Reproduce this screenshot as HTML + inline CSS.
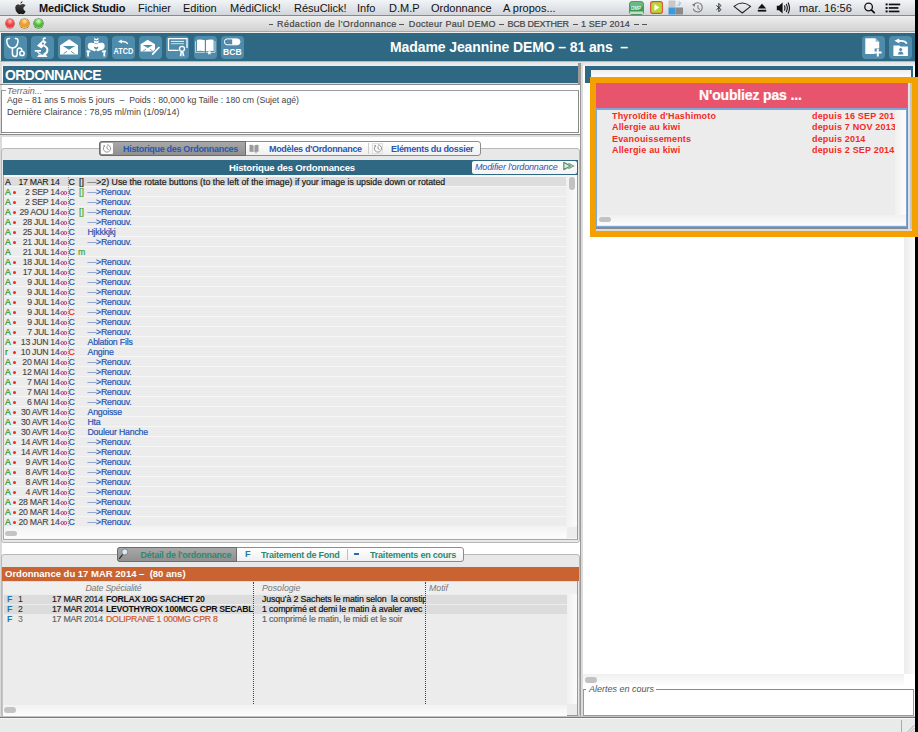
<!DOCTYPE html>
<html><head><meta charset="utf-8">
<style>
*{box-sizing:border-box}
html,body{margin:0;padding:0;width:918px;height:732px;overflow:hidden;background:#000;font-family:"Liberation Sans",sans-serif}
.a{position:absolute}
.t{position:absolute;white-space:pre;line-height:1}
#win{position:absolute;left:0;top:0;width:915px;height:732px;background:#ececec;overflow:hidden}
#menubar{left:0;top:0;width:918px;height:16px;background:linear-gradient(#f2f4f7,#d2d6db);border-bottom:1px solid #8a8a8a}
#titlebar{left:0;top:16px;width:915px;height:16px;background:linear-gradient(#eeeeee,#d2d2d2);border-bottom:1px solid #a8a8a8}
.dot{position:absolute;top:19px;width:9px;height:9px;border-radius:50%}
#toolbar{left:1px;top:33px;width:914px;height:28px;background:#2f6882}
.btn{position:absolute;top:36px;width:23px;height:23px;border-radius:4px;background:#4f8cab}
.btn svg{position:absolute;left:0;top:0}
.hdr{position:absolute;background:#2f6882}
.row{position:absolute;left:4px;width:562px;height:9px;background:#ececec}
.rt{position:absolute;font-size:8.75px;line-height:10px;white-space:pre;-webkit-text-stroke-width:0.2px}
.mi{font-size:11px;color:#111;top:2.5px}
.s{-webkit-text-stroke-width:0.2px}
</style></head><body>
<div id="win">
<!-- menu bar -->
<div id="menubar" class="a"></div>
<div class="t mi" style="left:39px;font-weight:bold;letter-spacing:-0.15px">MediClick Studio</div>
<div class="t mi" style="left:138px">Fichier</div>
<div class="t mi" style="left:183px">Edition</div>
<div class="t mi" style="left:230px">MédiClick!</div>
<div class="t mi" style="left:294px">RésuClick!</div>
<div class="t mi" style="left:357px">Info</div>
<div class="t mi" style="left:389px">D.M.P</div>
<div class="t mi" style="left:431px">Ordonnance</div>
<div class="t mi" style="left:503px">A propos...</div>
<div class="t mi" style="left:799px;letter-spacing:0.1px">mar. 16:56</div>
<svg class="a" style="left:13px;top:0px" width="14" height="15" viewBox="0 0 14 15"><defs><linearGradient id="ap" x1="0" y1="0" x2="0" y2="1"><stop offset="0" stop-color="#444"/><stop offset="1" stop-color="#111"/></linearGradient></defs><path d="M9.6 1 Q9.6 3.2 7.4 3.8 Q7.3 1.6 9.6 1 Z" fill="url(#ap)"/><path d="M7 4.9 Q8.6 4 10.2 4.1 Q11.8 4.3 12.6 5.4 Q10.2 6.6 10.3 8.6 Q10.5 10.6 12.6 11.2 Q12 12.8 11 13.7 Q10.2 14.4 9.2 14 Q8 13.5 7 13.9 Q5.8 14.4 5 13.6 Q2 10.6 2.2 7.4 Q2.4 4.6 5 4.3 Q6 4.3 7 4.9 Z" fill="url(#ap)"/></svg>
<svg class="a" style="left:629px;top:1px" width="16" height="14" viewBox="0 0 16 14"><rect x="0.5" y="0.5" width="14" height="13" rx="2.5" fill="#3f9a58" stroke="#2f7a40" stroke-width="0.6"/><rect x="1" y="1" width="13" height="5" rx="2" fill="#7cc890" opacity="0.7"/><text x="2" y="9" font-family="Liberation Sans" font-size="4.5" font-weight="bold" fill="#eaf6ea">DMP</text><rect x="1" y="10.5" width="13" height="2.5" fill="#e8f0e8" opacity="0.8"/></svg>
<svg class="a" style="left:650px;top:1px" width="13" height="13" viewBox="0 0 13 13"><rect x="0.6" y="0.6" width="11.8" height="11.8" rx="2.2" fill="#b6d832" stroke="#e0503a" stroke-width="1.1"/><path d="M4.4 3.3 L9.4 6.5 L4.4 9.7 Z" fill="#fff"/></svg>
<svg class="a" style="left:668px;top:0px" width="16" height="15" viewBox="0 0 16 15"><rect x="0.5" y="0.5" width="7" height="7" fill="#c8c8c8"/><rect x="0.5" y="7.5" width="7" height="7" fill="#3a9ae0"/><rect x="7.5" y="7.5" width="7.5" height="7" fill="#8a8a8a"/><path d="M10.5 1 L12 4 L9 5.5 M13 2 L11 6" stroke="#8ac0e8" stroke-width="0.8" fill="none"/></svg>
<svg class="a" style="left:691px;top:1px" width="13" height="13" viewBox="0 0 13 13"><path d="M3 3.6 A4.6 4.6 0 1 1 2.2 7.6" fill="none" stroke="#7a7a7a" stroke-width="1.1"/><path d="M0.8 3.4 L4.2 2.6 L3.6 6 Z" fill="#7a7a7a"/><path d="M7 4 V7.4 L9 8.4" fill="none" stroke="#7a7a7a" stroke-width="1"/></svg>
<svg class="a" style="left:715px;top:2px" width="8" height="12" viewBox="0 0 8 12"><path d="M1.4 3.4 L6 7.6 L3.8 9.8 V1.4 L6 3.6 L1.4 7.8" fill="none" stroke="#222" stroke-width="0.9"/></svg>
<svg class="a" style="left:733px;top:2px" width="19" height="12" viewBox="0 0 19 12"><path d="M1 4.4 Q9.2 -2.4 17.6 4.4 L9.3 11 Z" fill="none" stroke="#222" stroke-width="1.1" stroke-linejoin="round"/></svg>
<svg class="a" style="left:757px;top:2px" width="10" height="12" viewBox="0 0 10 12"><path d="M5 1.8 L9.2 6.4 H0.8 Z" fill="#111"/><rect x="0.8" y="7.8" width="8.4" height="1.8" fill="#111"/></svg>
<svg class="a" style="left:776px;top:1px" width="15" height="14" viewBox="0 0 15 14"><path d="M0.8 4.8 H3 L6.6 1.6 V12.4 L3 9.2 H0.8 Z" fill="#111"/><path d="M8.4 4.6 Q9.6 7 8.4 9.4 M10.2 3 Q12.4 7 10.2 11 M12 1.6 Q15 7 12 12.4" fill="none" stroke="#111" stroke-width="1.1"/></svg>
<svg class="a" style="left:863px;top:1px" width="13" height="14" viewBox="0 0 13 14"><circle cx="5.6" cy="6" r="3.8" fill="none" stroke="#111" stroke-width="1.3"/><path d="M8.4 8.8 L11.2 11.6" stroke="#111" stroke-width="1.8" stroke-linecap="round"/></svg>
<svg class="a" style="left:885px;top:2px" width="17" height="12" viewBox="0 0 17 12"><g fill="#111"><rect x="0.6" y="1.4" width="2" height="2"/><rect x="0.6" y="5" width="2" height="2"/><rect x="0.6" y="8.4" width="2" height="2"/><rect x="3.8" y="1.6" width="11.4" height="1.7"/><rect x="3.8" y="5.1" width="9.6" height="1.7"/><rect x="3.8" y="8.6" width="10.6" height="1.7"/></g></svg>

<!-- title bar -->
<div id="titlebar" class="a"></div>
<div class="dot" style="left:5.5px;top:19px;width:8.5px;height:8.5px;box-shadow:0 0 0 0.6px #9a3a3a;background:radial-gradient(circle at 50% 25%,#fcc 0,#f55 35%,#e33 60%,#f77 100%)"></div>
<div class="dot" style="left:20px;top:19px;width:8.5px;height:8.5px;box-shadow:0 0 0 0.6px #9a6a2a;background:radial-gradient(circle at 50% 25%,#ffe8b0 0,#f0a030 40%,#e89a20 60%,#fc6 100%)"></div>
<div class="dot" style="left:34.3px;top:19px;width:8.5px;height:8.5px;box-shadow:0 0 0 0.6px #3a7a3a;background:radial-gradient(circle at 50% 25%,#dfd 0,#6c4 40%,#4a3 60%,#9e7 100%)"></div>
<div class="a" style="left:268.7px;top:23.5px;width:4.5px;height:1px;background:#555"></div>
<div class="a" style="left:399.4px;top:23.5px;width:4.5px;height:1px;background:#555"></div>
<div class="a" style="left:499.2px;top:23.5px;width:4.5px;height:1px;background:#555"></div>
<div class="a" style="left:573.3px;top:23.5px;width:4.5px;height:1px;background:#555"></div>
<div class="a" style="left:634.3px;top:23.5px;width:4.5px;height:1px;background:#555"></div>
<div class="a" style="left:642px;top:23.5px;width:4.5px;height:1px;background:#555"></div>
<div class="t s" style="left:277px;top:19.5px;font-size:9px;color:#444;letter-spacing:0.44px">Rédaction de l'Ordonnance</div>
<div class="t s" style="left:408.8px;top:19.5px;font-size:9px;color:#444;letter-spacing:0.33px">Docteur Paul DEMO</div>
<div class="t s" style="left:507.5px;top:19.5px;font-size:9px;color:#444;letter-spacing:-0.24px">BCB DEXTHER</div>
<div class="t s" style="left:581px;top:19.5px;font-size:9px;color:#444;letter-spacing:0.1px">1 SEP 2014</div>

<!-- toolbar -->
<div id="toolbar" class="a"></div>
<div class="btn" style="left:4px"><svg width="23" height="23" viewBox="0 0 23 23"><g fill="none" stroke="#fff" stroke-width="1.5" stroke-linecap="round"><path d="M5.4 2.4 Q2.6 2.2 2.8 5.4 Q3.4 11.6 8.4 12 Q13.4 11.6 14 5.4 Q14.2 2.2 11.4 2.4"/><path d="M8.4 12 V17.6 Q8.4 20.6 11 20.6 Q13.2 20.6 13.2 17.4 V15 Q13.2 12 15.5 12 Q17.9 12 17.9 15"/><circle cx="18" cy="17.4" r="2.2"/></g></svg></div>
<div class="btn" style="left:31px"><svg width="23" height="23" viewBox="0 0 23 23"><g fill="#fff"><path d="M11.2 2.4 L14.2 0.9 L15.1 2.5 L12.1 4 Z"/><path d="M12.2 3.8 L15.6 6 L10.6 12.6 L6 9.8 Z"/><rect x="3.8" y="14" width="6.2" height="1.7"/><path d="M7.8 18.4 H14.8 L16.6 20.9 H6 Z"/></g><circle cx="11.9" cy="7.6" r="1.1" fill="#4f8cab"/><path d="M12.6 9.6 Q16.6 10.8 16.4 14.4 Q16.2 17.6 12.6 18.4" fill="none" stroke="#fff" stroke-width="2"/><path d="M6.4 15.6 Q7.2 17.4 9.6 17.8" fill="none" stroke="#fff" stroke-width="1.2"/></svg></div>
<div class="btn" style="left:58px"><svg width="23" height="23" viewBox="0 0 23 23"><path d="M2.1 9.2 L11.2 3.2 L20 9.2 V18.6 H2.1 Z" fill="#fff"/><path d="M4.8 10 H17.2 L11 13.7 Z" fill="#4f8cab"/><path d="M5.5 17.8 L9 15.3 M16.5 17.8 L13 15.3" stroke="#4f8cab" stroke-width="0.9"/></svg></div>
<div class="btn" style="left:85px"><svg width="23" height="23" viewBox="0 0 23 23"><g fill="#fff"><path d="M9 1.8 L11.2 3 L13.6 1.8 L13.2 3.8 L11.2 4.6 L9.4 3.8 Z"/><path d="M8.8 4.6 L11.2 5.6 L13.8 4.6 L13.4 6.8 L11.2 7.6 L9.2 6.8 Z"/><path d="M11.2 8.2 Q8.5 6.4 5 6.8 Q2.4 7.4 2.8 10.8 Q3.2 13.6 6.6 14.2 Q8.6 14.4 9.6 15.4 Q10.4 14.2 11.2 14.6 Q12 14.2 12.8 15.4 Q13.8 14.4 15.8 14.2 Q19.2 13.6 19.6 10.8 Q20 7.4 17.4 6.8 Q14 6.4 11.2 8.2 Z"/><path d="M1.4 14.6 Q3.4 13.6 5.6 15 L5 16.4 L4 16.2 V20.6 H2.2 V16.4 Q1.2 16 1.4 14.6 Z"/><path d="M21 14.6 Q19 13.6 16.8 15 L17.4 16.4 L18.4 16.2 V20.6 H20.2 V16.4 Q21.2 16 21 14.6 Z"/></g><path d="M11.2 11.4 Q10 10.2 9 11 Q8.6 12 11.2 13.8 Q13.8 12 13.4 11 Q12.4 10.2 11.2 11.4 Z" fill="#4f8cab"/></svg></div>
<div class="btn" style="left:112px"><svg width="23" height="23" viewBox="0 0 23 23"><path d="M15.8 7.8 Q14.2 5.2 9.8 5.6" fill="none" stroke="#fff" stroke-width="1.4"/><path d="M6 5.4 L9.8 3.6 L10 7.6 Z" fill="#fff"/><text x="1.5" y="17.8" font-family="Liberation Sans" font-weight="bold" font-size="8.6" fill="#fff" textLength="19.8" lengthAdjust="spacingAndGlyphs">ATCD</text></svg></div>
<div class="btn" style="left:139px"><svg width="23" height="23" viewBox="0 0 23 23"><path d="M1.6 8.3 L8.6 3.8 L16 8.3 V15.6 H1.6 Z" fill="#fff"/><path d="M3.8 9 H13.8 L8.8 12 Z" fill="#4f8cab"/><path d="M4 15 L7 13 M13.6 15 L10.6 13" stroke="#4f8cab" stroke-width="0.8"/><path d="M13.3 18.6 L20.2 11.2" stroke="#4f8cab" stroke-width="3.4"/><path d="M13.4 18.4 L20.4 11" stroke="#fff" stroke-width="1.8"/><path d="M12.6 19.4 L13.4 17.6 L14.2 18.4 Z" fill="#fff"/></svg></div>
<div class="btn" style="left:166px"><svg width="23" height="23" viewBox="0 0 23 23"><path d="M12.6 14.3 H2.5 V2.6 H21 V12" fill="none" stroke="#fff" stroke-width="1.3"/><rect x="5" y="4.9" width="13" height="1" fill="#fff" opacity="0.9"/><rect x="5" y="7.2" width="13" height="1" fill="#fff" opacity="0.7"/><circle cx="16" cy="12.8" r="2.5" fill="none" stroke="#fff" stroke-width="1.3"/><path d="M14.6 15.4 L13.6 20.4 L14.6 19.8 L15.4 20.8 L16 15.8 Z M17.4 15.4 L18.6 20.4 L17.6 19.8 L16.8 20.8 L16 15.8 Z" fill="#fff"/></svg></div>
<div class="btn" style="left:194px"><svg width="23" height="23" viewBox="0 0 23 23"><path d="M1.6 5 V16.4 H10.8 M21 5 V16.4 H12" fill="none" stroke="#fff" stroke-width="0.8" opacity="0.8"/><path d="M3 3.8 Q7 3.2 10.8 4.2 V15.2 Q7 14.4 3 15 Z" fill="#fff"/><path d="M19.6 3.8 Q15.6 3.2 12 4.2 V15.2 Q15.6 14.4 19.6 15 Z" fill="#fff"/><path d="M14.2 15.2 H16.6 V18.8 L15.4 17.8 L14.2 18.8 Z" fill="#fff"/></svg></div>
<div class="btn" style="left:221px"><svg width="23" height="23" viewBox="0 0 23 23"><path d="M6.2 2.9 H16.2 Q19 2.9 19 5.8 Q19 8.8 16.2 8.8 H6.2 Q3.4 8.8 3.4 5.8 Q3.4 2.9 6.2 2.9 Z" fill="none" stroke="#fff" stroke-width="1"/><path d="M11.2 2.9 H16.2 Q19 2.9 19 5.8 Q19 8.8 16.2 8.8 H11.2 Z" fill="#fff"/><text x="2" y="18.8" font-family="Liberation Sans" font-weight="bold" font-size="9" fill="#fff" textLength="18.6" lengthAdjust="spacingAndGlyphs">BCB</text></svg></div>
<div class="t" style="left:390px;top:40px;font-size:14px;font-weight:bold;color:#fff;letter-spacing:-0.1px">Madame Jeannine DEMO – 81 ans  –</div>
<div class="btn" style="left:862px"><svg width="23" height="23" viewBox="0 0 23 23"><path d="M3.3 2.2 H13.6 L17.2 5.8 V12.6 H12.6 V18 H3.3 Z" fill="#fff"/><path d="M13.6 2.2 V5.8 H17.2" fill="#4f8cab" opacity="0.6"/><path d="M15.8 13 V20.4 M12.2 16.6 H19.6" stroke="#fff" stroke-width="2"/></svg></div>
<div class="btn" style="left:889px"><svg width="23" height="23" viewBox="0 0 23 23"><path d="M17.8 7.6 Q15.8 4.2 10 5" fill="none" stroke="#fff" stroke-width="1.8"/><path d="M5.4 4.8 L10.2 2.4 L10.4 7.4 Z" fill="#fff"/><path d="M4.4 9.4 H10.6 L11.4 10.6 H18.9 V19.9 H4.4 Z" fill="#fff"/><circle cx="11.7" cy="13.6" r="1.5" fill="#4f8cab"/><path d="M9 18.6 Q9.2 15.6 11.7 15.6 Q14.2 15.6 14.4 18.6 Z" fill="#4f8cab"/></svg></div>

<!-- LEFT PANEL -->
<div class="a" style="left:0;top:61px;width:915px;height:5px;background:linear-gradient(#b8b8b8 0,#b8b8b8 1px,#e2e2e2 1px,#efefef)"></div>
<div class="a" style="left:0;top:66px;width:580px;height:652px;background:#fff"></div>
<div class="a" style="left:0;top:63px;width:1.5px;height:655px;background:#dadada"></div>
<div class="hdr" style="left:3px;top:66px;width:575px;height:17px"></div>
<div class="t" style="left:5px;top:68px;font-size:14px;font-weight:bold;color:#fff;letter-spacing:-0.6px">ORDONNANCE</div>
<div class="a" style="left:0;top:83px;width:580px;height:1px;background:#dcdcdc"></div>
<div class="a" style="left:0;top:84px;width:580px;height:1px;background:#8a8a8a"></div>
<!-- terrain box -->
<div class="a" style="left:1px;top:90px;width:578px;height:43px;border:1px solid #8a8a8a;border-top-color:#9a9a9a"></div>
<div class="a" style="left:6px;top:86px;width:38px;height:8px;background:#fff"></div>
<div class="t" style="left:7px;top:87px;font-size:9px;font-style:italic;color:#666">Terrain...</div>
<div class="t" style="left:7px;top:96px;font-size:8.7px;color:#444">Age – 81 ans 5 mois 5 jours  –  Poids : 80,000 kg Taille : 180 cm (Sujet agé)</div>
<div class="t" style="left:7px;top:108px;font-size:9px;color:#444">Dernière Clairance : 78,95 ml/min (1/09/14)</div>
<div class="a" style="left:0;top:134px;width:580px;height:1px;background:#8a8a8a"></div>
<div class="a" style="left:0;top:135px;width:580px;height:1.5px;background:#dedede"></div>

<!-- historique groupbox -->
<div class="a" style="left:1px;top:148px;width:579px;height:395px;border:1px solid #b8b8b8;border-radius:3px;background:#e8e8e8"></div>
<!-- tabs -->
<div class="a" style="left:99px;top:141px;width:382px;height:15px;border:1px solid #8c8c8c;border-radius:3px;background:linear-gradient(#ffffff,#f0f0f0)"></div>
<div class="a" style="left:99px;top:141px;width:147px;height:15px;border:1px solid #6c6c6c;border-radius:3px 0 0 3px;background:linear-gradient(#a8a8a8,#909090)"></div>
<div class="a" style="left:101px;top:143px;width:12px;height:11px;background:#fdfdfd;border-radius:1px"></div>
<svg class="a" style="left:101px;top:143px" width="12" height="11" viewBox="0 0 12 11"><path d="M3.2 3.2 A3.6 3.6 0 1 0 6 1.9" fill="none" stroke="#8a8a8a" stroke-width="0.9"/><path d="M2.2 2.2 L4.2 2.2 L3.4 4.2 Z" fill="#8a8a8a"/><path d="M6 3.4 V5.6 L7.6 6.6" fill="none" stroke="#8a8a8a" stroke-width="0.9"/></svg>
<div class="t" style="left:123px;top:145px;font-size:9px;font-weight:bold;color:#2a55b0;letter-spacing:-0.31px">Historique des Ordonnances</div>
<svg class="a" style="left:248px;top:143px" width="12" height="11" viewBox="0 0 12 11"><path d="M1.5 2 Q3.5 1.6 5.6 2.4 V9 Q3.5 8.4 1.5 8.8 Z M10.5 2 Q8.5 1.6 6.4 2.4 V9 Q8.5 8.4 10.5 8.8 Z" fill="#9a9a9a"/><path d="M7.4 8.6 H8.6 V10.4 L8 9.8 L7.4 10.4 Z" fill="#9a9a9a"/></svg>
<div class="t" style="left:269px;top:145px;font-size:9px;font-weight:bold;color:#2a55b0;letter-spacing:-0.32px">Modèles d'Ordonnance</div>
<div class="a" style="left:368px;top:143px;width:1px;height:11px;background:#cfcfcf"></div>
<div class="a" style="left:372px;top:143px;width:11px;height:11px;background:#f8f8f8;border:1px solid #e0e0e0"></div>
<svg class="a" style="left:372px;top:143px" width="12" height="11" viewBox="0 0 12 11"><path d="M3.2 3.2 A3.6 3.6 0 1 0 6 1.9" fill="none" stroke="#8a8a8a" stroke-width="0.9"/><path d="M2.2 2.2 L4.2 2.2 L3.4 4.2 Z" fill="#8a8a8a"/><path d="M6 3.4 V5.6 L7.6 6.6" fill="none" stroke="#8a8a8a" stroke-width="0.9"/></svg>
<div class="t" style="left:391px;top:145px;font-size:9px;font-weight:bold;color:#2a55b0;letter-spacing:-0.3px">Eléments du dossier</div>

<!-- historique header -->
<div class="hdr" style="left:3px;top:160px;width:575px;height:15px"></div>
<div class="t" style="left:229px;top:163px;font-size:9.6px;font-weight:bold;color:#fff;letter-spacing:-0.2px">Historique des Ordonnances</div>
<div class="a" style="left:472px;top:161px;width:105px;height:13px;background:linear-gradient(#fff,#f4f4f4);border-radius:2px"></div>
<svg class="a" style="left:562px;top:161px" width="13" height="10" viewBox="0 0 13 10"><path d="M1.8 1.4 L8.6 5 L1.8 8.6 Z" fill="#dcecdc" stroke="#5e9070" stroke-width="1.2" stroke-linejoin="round"/><path d="M6.4 2.2 L11.6 5 L6.4 7.8" fill="none" stroke="#6e9a80" stroke-width="1.1"/></svg>
<div class="t" style="left:475px;top:163px;font-size:9px;font-style:italic;color:#2a55b0;letter-spacing:-0.15px">Modifier l'ordonnance</div>

<!-- list -->
<div class="a" style="left:3px;top:175px;width:575px;height:365px;background:#f6f6f6;border-left:1px solid #aaa;border-bottom:1px solid #aaa;border-right:1px solid #999"></div>
<div class="row" style="top:177px;background:#dddddd"></div>
<div class="rt" style="left:5px;top:177px;color:#1a1a1a">A</div>
<div class="rt" style="left:0;width:59.5px;text-align:right;top:177px;color:#1a1a1a;letter-spacing:-0.3px;-webkit-text-stroke-width:0.1px">17 MAR 14</div>
<div class="rt" style="left:68.5px;top:177px;color:#1a1a1a">C</div>
<div class="rt" style="left:79px;top:177px;color:#1a1a1a">[]</div>
<div class="rt" style="left:87.5px;top:177px;color:#1a1a1a;"><span style="color:#777">—</span>>2) Use the rotate buttons (to the left of the image) if your image is upside down or rotated</div>
<div class="row" style="top:187px;background:#ececec"></div>
<div class="rt" style="left:5px;top:187px;color:#2a922a">A</div>
<div class="a" style="left:12.5px;top:190.5px;width:3px;height:3px;border-radius:50%;background:#f21"></div>
<div class="rt" style="left:0;width:59.5px;text-align:right;top:187px;color:#444;letter-spacing:-0.3px;-webkit-text-stroke-width:0.1px">2 SEP 14</div>
<svg class="a" style="left:60px;top:190px" width="8" height="6" viewBox="0 0 8 6"><circle cx="2.3" cy="3" r="1.5" fill="none" stroke="#b03a78" stroke-width="0.95"/><circle cx="5.3" cy="3" r="1.5" fill="none" stroke="#b03a78" stroke-width="0.95"/></svg>
<div class="rt" style="left:68.5px;top:187px;color:#2556b4">C</div>
<div class="rt" style="left:79px;top:187px;color:#3aa53a">[]</div>
<div class="rt" style="left:87.5px;top:187px;color:#2556b4;letter-spacing:-0.2px;"><span style="color:#7c98cc">—</span>>Renouv.</div>
<div class="row" style="top:197px;background:#ececec"></div>
<div class="rt" style="left:5px;top:197px;color:#2a922a">A</div>
<div class="a" style="left:12.5px;top:200.5px;width:3px;height:3px;border-radius:50%;background:#f21"></div>
<div class="rt" style="left:0;width:59.5px;text-align:right;top:197px;color:#444;letter-spacing:-0.3px;-webkit-text-stroke-width:0.1px">2 SEP 14</div>
<svg class="a" style="left:60px;top:200px" width="8" height="6" viewBox="0 0 8 6"><circle cx="2.3" cy="3" r="1.5" fill="none" stroke="#b03a78" stroke-width="0.95"/><circle cx="5.3" cy="3" r="1.5" fill="none" stroke="#b03a78" stroke-width="0.95"/></svg>
<div class="rt" style="left:68.5px;top:197px;color:#2556b4">C</div>
<div class="rt" style="left:87.5px;top:197px;color:#2556b4;letter-spacing:-0.2px;"><span style="color:#7c98cc">—</span>>Renouv.</div>
<div class="row" style="top:207px;background:#ececec"></div>
<div class="rt" style="left:5px;top:207px;color:#2a922a">A</div>
<div class="a" style="left:12.5px;top:210.5px;width:3px;height:3px;border-radius:50%;background:#f21"></div>
<div class="rt" style="left:0;width:59.5px;text-align:right;top:207px;color:#444;letter-spacing:-0.3px;-webkit-text-stroke-width:0.1px">29 AOU 14</div>
<svg class="a" style="left:60px;top:210px" width="8" height="6" viewBox="0 0 8 6"><circle cx="2.3" cy="3" r="1.5" fill="none" stroke="#b03a78" stroke-width="0.95"/><circle cx="5.3" cy="3" r="1.5" fill="none" stroke="#b03a78" stroke-width="0.95"/></svg>
<div class="rt" style="left:68.5px;top:207px;color:#2556b4">C</div>
<div class="rt" style="left:79px;top:207px;color:#3aa53a">[]</div>
<div class="rt" style="left:87.5px;top:207px;color:#2556b4;letter-spacing:-0.2px;"><span style="color:#7c98cc">—</span>>Renouv.</div>
<div class="row" style="top:217px;background:#ececec"></div>
<div class="rt" style="left:5px;top:217px;color:#2a922a">A</div>
<div class="a" style="left:12.5px;top:220.5px;width:3px;height:3px;border-radius:50%;background:#f21"></div>
<div class="rt" style="left:0;width:59.5px;text-align:right;top:217px;color:#444;letter-spacing:-0.3px;-webkit-text-stroke-width:0.1px">28 JUL 14</div>
<svg class="a" style="left:60px;top:220px" width="8" height="6" viewBox="0 0 8 6"><circle cx="2.3" cy="3" r="1.5" fill="none" stroke="#b03a78" stroke-width="0.95"/><circle cx="5.3" cy="3" r="1.5" fill="none" stroke="#b03a78" stroke-width="0.95"/></svg>
<div class="rt" style="left:68.5px;top:217px;color:#2556b4">C</div>
<div class="rt" style="left:87.5px;top:217px;color:#2556b4;letter-spacing:-0.2px;"><span style="color:#7c98cc">—</span>>Renouv.</div>
<div class="row" style="top:227px;background:#ececec"></div>
<div class="rt" style="left:5px;top:227px;color:#2a922a">A</div>
<div class="a" style="left:12.5px;top:230.5px;width:3px;height:3px;border-radius:50%;background:#f21"></div>
<div class="rt" style="left:0;width:59.5px;text-align:right;top:227px;color:#444;letter-spacing:-0.3px;-webkit-text-stroke-width:0.1px">25 JUL 14</div>
<svg class="a" style="left:60px;top:230px" width="8" height="6" viewBox="0 0 8 6"><circle cx="2.3" cy="3" r="1.5" fill="none" stroke="#b03a78" stroke-width="0.95"/><circle cx="5.3" cy="3" r="1.5" fill="none" stroke="#b03a78" stroke-width="0.95"/></svg>
<div class="rt" style="left:68.5px;top:227px;color:#2556b4">C</div>
<div class="rt" style="left:87.5px;top:227px;color:#2556b4;letter-spacing:-0.2px;">Hjkkkjkj</div>
<div class="row" style="top:237px;background:#ececec"></div>
<div class="rt" style="left:5px;top:237px;color:#2a922a">A</div>
<div class="a" style="left:12.5px;top:240.5px;width:3px;height:3px;border-radius:50%;background:#f21"></div>
<div class="rt" style="left:0;width:59.5px;text-align:right;top:237px;color:#444;letter-spacing:-0.3px;-webkit-text-stroke-width:0.1px">21 JUL 14</div>
<svg class="a" style="left:60px;top:240px" width="8" height="6" viewBox="0 0 8 6"><circle cx="2.3" cy="3" r="1.5" fill="none" stroke="#b03a78" stroke-width="0.95"/><circle cx="5.3" cy="3" r="1.5" fill="none" stroke="#b03a78" stroke-width="0.95"/></svg>
<div class="rt" style="left:68.5px;top:237px;color:#2556b4">C</div>
<div class="rt" style="left:87.5px;top:237px;color:#2556b4;letter-spacing:-0.2px;"><span style="color:#7c98cc">—</span>>Renouv.</div>
<div class="row" style="top:247px;background:#ececec"></div>
<div class="rt" style="left:5px;top:247px;color:#2a922a">A</div>
<div class="rt" style="left:0;width:59.5px;text-align:right;top:247px;color:#444;letter-spacing:-0.3px;-webkit-text-stroke-width:0.1px">21 JUL 14</div>
<svg class="a" style="left:60px;top:250px" width="8" height="6" viewBox="0 0 8 6"><circle cx="2.3" cy="3" r="1.5" fill="none" stroke="#b03a78" stroke-width="0.95"/><circle cx="5.3" cy="3" r="1.5" fill="none" stroke="#b03a78" stroke-width="0.95"/></svg>
<div class="rt" style="left:68.5px;top:247px;color:#2556b4">C</div>
<div class="rt" style="left:78px;top:247px;color:#3aa53a">m</div>
<div class="row" style="top:257px;background:#ececec"></div>
<div class="rt" style="left:5px;top:257px;color:#2a922a">A</div>
<div class="a" style="left:12.5px;top:260.5px;width:3px;height:3px;border-radius:50%;background:#f21"></div>
<div class="rt" style="left:0;width:59.5px;text-align:right;top:257px;color:#444;letter-spacing:-0.3px;-webkit-text-stroke-width:0.1px">18 JUL 14</div>
<svg class="a" style="left:60px;top:260px" width="8" height="6" viewBox="0 0 8 6"><circle cx="2.3" cy="3" r="1.5" fill="none" stroke="#b03a78" stroke-width="0.95"/><circle cx="5.3" cy="3" r="1.5" fill="none" stroke="#b03a78" stroke-width="0.95"/></svg>
<div class="rt" style="left:68.5px;top:257px;color:#2556b4">C</div>
<div class="rt" style="left:87.5px;top:257px;color:#2556b4;letter-spacing:-0.2px;"><span style="color:#7c98cc">—</span>>Renouv.</div>
<div class="row" style="top:267px;background:#ececec"></div>
<div class="rt" style="left:5px;top:267px;color:#2a922a">A</div>
<div class="a" style="left:12.5px;top:270.5px;width:3px;height:3px;border-radius:50%;background:#f21"></div>
<div class="rt" style="left:0;width:59.5px;text-align:right;top:267px;color:#444;letter-spacing:-0.3px;-webkit-text-stroke-width:0.1px">17 JUL 14</div>
<svg class="a" style="left:60px;top:270px" width="8" height="6" viewBox="0 0 8 6"><circle cx="2.3" cy="3" r="1.5" fill="none" stroke="#b03a78" stroke-width="0.95"/><circle cx="5.3" cy="3" r="1.5" fill="none" stroke="#b03a78" stroke-width="0.95"/></svg>
<div class="rt" style="left:68.5px;top:267px;color:#2556b4">C</div>
<div class="rt" style="left:87.5px;top:267px;color:#2556b4;letter-spacing:-0.2px;"><span style="color:#7c98cc">—</span>>Renouv.</div>
<div class="row" style="top:277px;background:#ececec"></div>
<div class="rt" style="left:5px;top:277px;color:#2a922a">A</div>
<div class="a" style="left:12.5px;top:280.5px;width:3px;height:3px;border-radius:50%;background:#f21"></div>
<div class="rt" style="left:0;width:59.5px;text-align:right;top:277px;color:#444;letter-spacing:-0.3px;-webkit-text-stroke-width:0.1px">9 JUL 14</div>
<svg class="a" style="left:60px;top:280px" width="8" height="6" viewBox="0 0 8 6"><circle cx="2.3" cy="3" r="1.5" fill="none" stroke="#b03a78" stroke-width="0.95"/><circle cx="5.3" cy="3" r="1.5" fill="none" stroke="#b03a78" stroke-width="0.95"/></svg>
<div class="rt" style="left:68.5px;top:277px;color:#2556b4">C</div>
<div class="rt" style="left:87.5px;top:277px;color:#2556b4;letter-spacing:-0.2px;"><span style="color:#7c98cc">—</span>>Renouv.</div>
<div class="row" style="top:287px;background:#ececec"></div>
<div class="rt" style="left:5px;top:287px;color:#2a922a">A</div>
<div class="a" style="left:12.5px;top:290.5px;width:3px;height:3px;border-radius:50%;background:#f21"></div>
<div class="rt" style="left:0;width:59.5px;text-align:right;top:287px;color:#444;letter-spacing:-0.3px;-webkit-text-stroke-width:0.1px">9 JUL 14</div>
<svg class="a" style="left:60px;top:290px" width="8" height="6" viewBox="0 0 8 6"><circle cx="2.3" cy="3" r="1.5" fill="none" stroke="#b03a78" stroke-width="0.95"/><circle cx="5.3" cy="3" r="1.5" fill="none" stroke="#b03a78" stroke-width="0.95"/></svg>
<div class="rt" style="left:68.5px;top:287px;color:#2556b4">C</div>
<div class="rt" style="left:87.5px;top:287px;color:#2556b4;letter-spacing:-0.2px;"><span style="color:#7c98cc">—</span>>Renouv.</div>
<div class="row" style="top:297px;background:#ececec"></div>
<div class="rt" style="left:5px;top:297px;color:#2a922a">A</div>
<div class="a" style="left:12.5px;top:300.5px;width:3px;height:3px;border-radius:50%;background:#f21"></div>
<div class="rt" style="left:0;width:59.5px;text-align:right;top:297px;color:#444;letter-spacing:-0.3px;-webkit-text-stroke-width:0.1px">9 JUL 14</div>
<svg class="a" style="left:60px;top:300px" width="8" height="6" viewBox="0 0 8 6"><circle cx="2.3" cy="3" r="1.5" fill="none" stroke="#b03a78" stroke-width="0.95"/><circle cx="5.3" cy="3" r="1.5" fill="none" stroke="#b03a78" stroke-width="0.95"/></svg>
<div class="rt" style="left:68.5px;top:297px;color:#2556b4">C</div>
<div class="rt" style="left:87.5px;top:297px;color:#2556b4;letter-spacing:-0.2px;"><span style="color:#7c98cc">—</span>>Renouv.</div>
<div class="row" style="top:307px;background:#ececec"></div>
<div class="rt" style="left:5px;top:307px;color:#2a922a">A</div>
<div class="a" style="left:12.5px;top:310.5px;width:3px;height:3px;border-radius:50%;background:#f21"></div>
<div class="rt" style="left:0;width:59.5px;text-align:right;top:307px;color:#444;letter-spacing:-0.3px;-webkit-text-stroke-width:0.1px">9 JUL 14</div>
<svg class="a" style="left:60px;top:310px" width="8" height="6" viewBox="0 0 8 6"><circle cx="2.3" cy="3" r="1.5" fill="none" stroke="#b03a78" stroke-width="0.95"/><circle cx="5.3" cy="3" r="1.5" fill="none" stroke="#b03a78" stroke-width="0.95"/></svg>
<div class="rt" style="left:68.5px;top:307px;color:#ee2a1a">C</div>
<div class="rt" style="left:87.5px;top:307px;color:#2556b4;letter-spacing:-0.2px;"><span style="color:#7c98cc">—</span>>Renouv.</div>
<div class="row" style="top:317px;background:#ececec"></div>
<div class="rt" style="left:5px;top:317px;color:#2a922a">A</div>
<div class="a" style="left:12.5px;top:320.5px;width:3px;height:3px;border-radius:50%;background:#f21"></div>
<div class="rt" style="left:0;width:59.5px;text-align:right;top:317px;color:#444;letter-spacing:-0.3px;-webkit-text-stroke-width:0.1px">9 JUL 14</div>
<svg class="a" style="left:60px;top:320px" width="8" height="6" viewBox="0 0 8 6"><circle cx="2.3" cy="3" r="1.5" fill="none" stroke="#b03a78" stroke-width="0.95"/><circle cx="5.3" cy="3" r="1.5" fill="none" stroke="#b03a78" stroke-width="0.95"/></svg>
<div class="rt" style="left:68.5px;top:317px;color:#2556b4">C</div>
<div class="rt" style="left:87.5px;top:317px;color:#2556b4;letter-spacing:-0.2px;"><span style="color:#7c98cc">—</span>>Renouv.</div>
<div class="row" style="top:327px;background:#ececec"></div>
<div class="rt" style="left:5px;top:327px;color:#2a922a">A</div>
<div class="a" style="left:12.5px;top:330.5px;width:3px;height:3px;border-radius:50%;background:#f21"></div>
<div class="rt" style="left:0;width:59.5px;text-align:right;top:327px;color:#444;letter-spacing:-0.3px;-webkit-text-stroke-width:0.1px">7 JUL 14</div>
<svg class="a" style="left:60px;top:330px" width="8" height="6" viewBox="0 0 8 6"><circle cx="2.3" cy="3" r="1.5" fill="none" stroke="#b03a78" stroke-width="0.95"/><circle cx="5.3" cy="3" r="1.5" fill="none" stroke="#b03a78" stroke-width="0.95"/></svg>
<div class="rt" style="left:68.5px;top:327px;color:#2556b4">C</div>
<div class="rt" style="left:87.5px;top:327px;color:#2556b4;letter-spacing:-0.2px;"><span style="color:#7c98cc">—</span>>Renouv.</div>
<div class="row" style="top:337px;background:#ececec"></div>
<div class="rt" style="left:5px;top:337px;color:#2a922a">A</div>
<div class="a" style="left:12.5px;top:340.5px;width:3px;height:3px;border-radius:50%;background:#f21"></div>
<div class="rt" style="left:0;width:59.5px;text-align:right;top:337px;color:#444;letter-spacing:-0.3px;-webkit-text-stroke-width:0.1px">13 JUN 14</div>
<svg class="a" style="left:60px;top:340px" width="8" height="6" viewBox="0 0 8 6"><circle cx="2.3" cy="3" r="1.5" fill="none" stroke="#b03a78" stroke-width="0.95"/><circle cx="5.3" cy="3" r="1.5" fill="none" stroke="#b03a78" stroke-width="0.95"/></svg>
<div class="rt" style="left:68.5px;top:337px;color:#2556b4">C</div>
<div class="rt" style="left:87.5px;top:337px;color:#2556b4;letter-spacing:-0.2px;">Ablation Fils</div>
<div class="row" style="top:347px;background:#ececec"></div>
<div class="rt" style="left:5px;top:347px;color:#2a922a">r</div>
<div class="a" style="left:12.5px;top:350.5px;width:3px;height:3px;border-radius:50%;background:#f21"></div>
<div class="rt" style="left:0;width:59.5px;text-align:right;top:347px;color:#444;letter-spacing:-0.3px;-webkit-text-stroke-width:0.1px">10 JUN 14</div>
<svg class="a" style="left:60px;top:350px" width="8" height="6" viewBox="0 0 8 6"><circle cx="2.3" cy="3" r="1.5" fill="none" stroke="#b03a78" stroke-width="0.95"/><circle cx="5.3" cy="3" r="1.5" fill="none" stroke="#b03a78" stroke-width="0.95"/></svg>
<div class="rt" style="left:68.5px;top:347px;color:#ee2a1a">C</div>
<div class="rt" style="left:87.5px;top:347px;color:#2556b4;letter-spacing:-0.2px;">Angine</div>
<div class="row" style="top:357px;background:#ececec"></div>
<div class="rt" style="left:5px;top:357px;color:#2a922a">A</div>
<div class="a" style="left:12.5px;top:360.5px;width:3px;height:3px;border-radius:50%;background:#f21"></div>
<div class="rt" style="left:0;width:59.5px;text-align:right;top:357px;color:#444;letter-spacing:-0.3px;-webkit-text-stroke-width:0.1px">20 MAI 14</div>
<svg class="a" style="left:60px;top:360px" width="8" height="6" viewBox="0 0 8 6"><circle cx="2.3" cy="3" r="1.5" fill="none" stroke="#b03a78" stroke-width="0.95"/><circle cx="5.3" cy="3" r="1.5" fill="none" stroke="#b03a78" stroke-width="0.95"/></svg>
<div class="rt" style="left:68.5px;top:357px;color:#2556b4">C</div>
<div class="rt" style="left:87.5px;top:357px;color:#2556b4;letter-spacing:-0.2px;"><span style="color:#7c98cc">—</span>>Renouv.</div>
<div class="row" style="top:367px;background:#ececec"></div>
<div class="rt" style="left:5px;top:367px;color:#2a922a">A</div>
<div class="a" style="left:12.5px;top:370.5px;width:3px;height:3px;border-radius:50%;background:#f21"></div>
<div class="rt" style="left:0;width:59.5px;text-align:right;top:367px;color:#444;letter-spacing:-0.3px;-webkit-text-stroke-width:0.1px">12 MAI 14</div>
<svg class="a" style="left:60px;top:370px" width="8" height="6" viewBox="0 0 8 6"><circle cx="2.3" cy="3" r="1.5" fill="none" stroke="#b03a78" stroke-width="0.95"/><circle cx="5.3" cy="3" r="1.5" fill="none" stroke="#b03a78" stroke-width="0.95"/></svg>
<div class="rt" style="left:68.5px;top:367px;color:#2556b4">C</div>
<div class="rt" style="left:87.5px;top:367px;color:#2556b4;letter-spacing:-0.2px;"><span style="color:#7c98cc">—</span>>Renouv.</div>
<div class="row" style="top:377px;background:#ececec"></div>
<div class="rt" style="left:5px;top:377px;color:#2a922a">A</div>
<div class="a" style="left:12.5px;top:380.5px;width:3px;height:3px;border-radius:50%;background:#f21"></div>
<div class="rt" style="left:0;width:59.5px;text-align:right;top:377px;color:#444;letter-spacing:-0.3px;-webkit-text-stroke-width:0.1px">7 MAI 14</div>
<svg class="a" style="left:60px;top:380px" width="8" height="6" viewBox="0 0 8 6"><circle cx="2.3" cy="3" r="1.5" fill="none" stroke="#b03a78" stroke-width="0.95"/><circle cx="5.3" cy="3" r="1.5" fill="none" stroke="#b03a78" stroke-width="0.95"/></svg>
<div class="rt" style="left:68.5px;top:377px;color:#2556b4">C</div>
<div class="rt" style="left:87.5px;top:377px;color:#2556b4;letter-spacing:-0.2px;"><span style="color:#7c98cc">—</span>>Renouv.</div>
<div class="row" style="top:387px;background:#ececec"></div>
<div class="rt" style="left:5px;top:387px;color:#2a922a">A</div>
<div class="a" style="left:12.5px;top:390.5px;width:3px;height:3px;border-radius:50%;background:#f21"></div>
<div class="rt" style="left:0;width:59.5px;text-align:right;top:387px;color:#444;letter-spacing:-0.3px;-webkit-text-stroke-width:0.1px">7 MAI 14</div>
<svg class="a" style="left:60px;top:390px" width="8" height="6" viewBox="0 0 8 6"><circle cx="2.3" cy="3" r="1.5" fill="none" stroke="#b03a78" stroke-width="0.95"/><circle cx="5.3" cy="3" r="1.5" fill="none" stroke="#b03a78" stroke-width="0.95"/></svg>
<div class="rt" style="left:68.5px;top:387px;color:#2556b4">C</div>
<div class="rt" style="left:87.5px;top:387px;color:#2556b4;letter-spacing:-0.2px;"><span style="color:#7c98cc">—</span>>Renouv.</div>
<div class="row" style="top:397px;background:#ececec"></div>
<div class="rt" style="left:5px;top:397px;color:#2a922a">A</div>
<div class="a" style="left:12.5px;top:400.5px;width:3px;height:3px;border-radius:50%;background:#f21"></div>
<div class="rt" style="left:0;width:59.5px;text-align:right;top:397px;color:#444;letter-spacing:-0.3px;-webkit-text-stroke-width:0.1px">6 MAI 14</div>
<svg class="a" style="left:60px;top:400px" width="8" height="6" viewBox="0 0 8 6"><circle cx="2.3" cy="3" r="1.5" fill="none" stroke="#b03a78" stroke-width="0.95"/><circle cx="5.3" cy="3" r="1.5" fill="none" stroke="#b03a78" stroke-width="0.95"/></svg>
<div class="rt" style="left:68.5px;top:397px;color:#2556b4">C</div>
<div class="rt" style="left:87.5px;top:397px;color:#2556b4;letter-spacing:-0.2px;"><span style="color:#7c98cc">—</span>>Renouv.</div>
<div class="row" style="top:407px;background:#ececec"></div>
<div class="rt" style="left:5px;top:407px;color:#2a922a">A</div>
<div class="a" style="left:12.5px;top:410.5px;width:3px;height:3px;border-radius:50%;background:#f21"></div>
<div class="rt" style="left:0;width:59.5px;text-align:right;top:407px;color:#444;letter-spacing:-0.3px;-webkit-text-stroke-width:0.1px">30 AVR 14</div>
<svg class="a" style="left:60px;top:410px" width="8" height="6" viewBox="0 0 8 6"><circle cx="2.3" cy="3" r="1.5" fill="none" stroke="#b03a78" stroke-width="0.95"/><circle cx="5.3" cy="3" r="1.5" fill="none" stroke="#b03a78" stroke-width="0.95"/></svg>
<div class="rt" style="left:68.5px;top:407px;color:#2556b4">C</div>
<div class="rt" style="left:87.5px;top:407px;color:#2556b4;letter-spacing:-0.2px;">Angoisse</div>
<div class="row" style="top:417px;background:#ececec"></div>
<div class="rt" style="left:5px;top:417px;color:#2a922a">A</div>
<div class="a" style="left:12.5px;top:420.5px;width:3px;height:3px;border-radius:50%;background:#f21"></div>
<div class="rt" style="left:0;width:59.5px;text-align:right;top:417px;color:#444;letter-spacing:-0.3px;-webkit-text-stroke-width:0.1px">30 AVR 14</div>
<svg class="a" style="left:60px;top:420px" width="8" height="6" viewBox="0 0 8 6"><circle cx="2.3" cy="3" r="1.5" fill="none" stroke="#b03a78" stroke-width="0.95"/><circle cx="5.3" cy="3" r="1.5" fill="none" stroke="#b03a78" stroke-width="0.95"/></svg>
<div class="rt" style="left:68.5px;top:417px;color:#2556b4">C</div>
<div class="rt" style="left:87.5px;top:417px;color:#2556b4;letter-spacing:-0.2px;">Hta</div>
<div class="row" style="top:427px;background:#ececec"></div>
<div class="rt" style="left:5px;top:427px;color:#2a922a">A</div>
<div class="a" style="left:12.5px;top:430.5px;width:3px;height:3px;border-radius:50%;background:#f21"></div>
<div class="rt" style="left:0;width:59.5px;text-align:right;top:427px;color:#444;letter-spacing:-0.3px;-webkit-text-stroke-width:0.1px">30 AVR 14</div>
<svg class="a" style="left:60px;top:430px" width="8" height="6" viewBox="0 0 8 6"><circle cx="2.3" cy="3" r="1.5" fill="none" stroke="#b03a78" stroke-width="0.95"/><circle cx="5.3" cy="3" r="1.5" fill="none" stroke="#b03a78" stroke-width="0.95"/></svg>
<div class="rt" style="left:68.5px;top:427px;color:#2556b4">C</div>
<div class="rt" style="left:87.5px;top:427px;color:#2556b4;letter-spacing:-0.2px;">Douleur Hanche</div>
<div class="row" style="top:437px;background:#ececec"></div>
<div class="rt" style="left:5px;top:437px;color:#2a922a">A</div>
<div class="a" style="left:12.5px;top:440.5px;width:3px;height:3px;border-radius:50%;background:#f21"></div>
<div class="rt" style="left:0;width:59.5px;text-align:right;top:437px;color:#444;letter-spacing:-0.3px;-webkit-text-stroke-width:0.1px">14 AVR 14</div>
<svg class="a" style="left:60px;top:440px" width="8" height="6" viewBox="0 0 8 6"><circle cx="2.3" cy="3" r="1.5" fill="none" stroke="#b03a78" stroke-width="0.95"/><circle cx="5.3" cy="3" r="1.5" fill="none" stroke="#b03a78" stroke-width="0.95"/></svg>
<div class="rt" style="left:68.5px;top:437px;color:#2556b4">C</div>
<div class="rt" style="left:87.5px;top:437px;color:#2556b4;letter-spacing:-0.2px;"><span style="color:#7c98cc">—</span>>Renouv.</div>
<div class="row" style="top:447px;background:#ececec"></div>
<div class="rt" style="left:5px;top:447px;color:#2a922a">A</div>
<div class="a" style="left:12.5px;top:450.5px;width:3px;height:3px;border-radius:50%;background:#f21"></div>
<div class="rt" style="left:0;width:59.5px;text-align:right;top:447px;color:#444;letter-spacing:-0.3px;-webkit-text-stroke-width:0.1px">14 AVR 14</div>
<svg class="a" style="left:60px;top:450px" width="8" height="6" viewBox="0 0 8 6"><circle cx="2.3" cy="3" r="1.5" fill="none" stroke="#b03a78" stroke-width="0.95"/><circle cx="5.3" cy="3" r="1.5" fill="none" stroke="#b03a78" stroke-width="0.95"/></svg>
<div class="rt" style="left:68.5px;top:447px;color:#2556b4">C</div>
<div class="rt" style="left:87.5px;top:447px;color:#2556b4;letter-spacing:-0.2px;"><span style="color:#7c98cc">—</span>>Renouv.</div>
<div class="row" style="top:457px;background:#ececec"></div>
<div class="rt" style="left:5px;top:457px;color:#2a922a">A</div>
<div class="a" style="left:12.5px;top:460.5px;width:3px;height:3px;border-radius:50%;background:#f21"></div>
<div class="rt" style="left:0;width:59.5px;text-align:right;top:457px;color:#444;letter-spacing:-0.3px;-webkit-text-stroke-width:0.1px">9 AVR 14</div>
<svg class="a" style="left:60px;top:460px" width="8" height="6" viewBox="0 0 8 6"><circle cx="2.3" cy="3" r="1.5" fill="none" stroke="#b03a78" stroke-width="0.95"/><circle cx="5.3" cy="3" r="1.5" fill="none" stroke="#b03a78" stroke-width="0.95"/></svg>
<div class="rt" style="left:68.5px;top:457px;color:#2556b4">C</div>
<div class="rt" style="left:87.5px;top:457px;color:#2556b4;letter-spacing:-0.2px;"><span style="color:#7c98cc">—</span>>Renouv.</div>
<div class="row" style="top:467px;background:#ececec"></div>
<div class="rt" style="left:5px;top:467px;color:#2a922a">A</div>
<div class="a" style="left:12.5px;top:470.5px;width:3px;height:3px;border-radius:50%;background:#f21"></div>
<div class="rt" style="left:0;width:59.5px;text-align:right;top:467px;color:#444;letter-spacing:-0.3px;-webkit-text-stroke-width:0.1px">8 AVR 14</div>
<svg class="a" style="left:60px;top:470px" width="8" height="6" viewBox="0 0 8 6"><circle cx="2.3" cy="3" r="1.5" fill="none" stroke="#b03a78" stroke-width="0.95"/><circle cx="5.3" cy="3" r="1.5" fill="none" stroke="#b03a78" stroke-width="0.95"/></svg>
<div class="rt" style="left:68.5px;top:467px;color:#2556b4">C</div>
<div class="rt" style="left:87.5px;top:467px;color:#2556b4;letter-spacing:-0.2px;"><span style="color:#7c98cc">—</span>>Renouv.</div>
<div class="row" style="top:477px;background:#ececec"></div>
<div class="rt" style="left:5px;top:477px;color:#2a922a">A</div>
<div class="a" style="left:12.5px;top:480.5px;width:3px;height:3px;border-radius:50%;background:#f21"></div>
<div class="rt" style="left:0;width:59.5px;text-align:right;top:477px;color:#444;letter-spacing:-0.3px;-webkit-text-stroke-width:0.1px">8 AVR 14</div>
<svg class="a" style="left:60px;top:480px" width="8" height="6" viewBox="0 0 8 6"><circle cx="2.3" cy="3" r="1.5" fill="none" stroke="#b03a78" stroke-width="0.95"/><circle cx="5.3" cy="3" r="1.5" fill="none" stroke="#b03a78" stroke-width="0.95"/></svg>
<div class="rt" style="left:68.5px;top:477px;color:#2556b4">C</div>
<div class="rt" style="left:87.5px;top:477px;color:#2556b4;letter-spacing:-0.2px;"><span style="color:#7c98cc">—</span>>Renouv.</div>
<div class="row" style="top:487px;background:#ececec"></div>
<div class="rt" style="left:5px;top:487px;color:#2a922a">A</div>
<div class="a" style="left:12.5px;top:490.5px;width:3px;height:3px;border-radius:50%;background:#f21"></div>
<div class="rt" style="left:0;width:59.5px;text-align:right;top:487px;color:#444;letter-spacing:-0.3px;-webkit-text-stroke-width:0.1px">4 AVR 14</div>
<svg class="a" style="left:60px;top:490px" width="8" height="6" viewBox="0 0 8 6"><circle cx="2.3" cy="3" r="1.5" fill="none" stroke="#b03a78" stroke-width="0.95"/><circle cx="5.3" cy="3" r="1.5" fill="none" stroke="#b03a78" stroke-width="0.95"/></svg>
<div class="rt" style="left:68.5px;top:487px;color:#2556b4">C</div>
<div class="rt" style="left:87.5px;top:487px;color:#2556b4;letter-spacing:-0.2px;"><span style="color:#7c98cc">—</span>>Renouv.</div>
<div class="row" style="top:497px;background:#ececec"></div>
<div class="rt" style="left:5px;top:497px;color:#2a922a">A</div>
<div class="a" style="left:12.5px;top:500.5px;width:3px;height:3px;border-radius:50%;background:#f21"></div>
<div class="rt" style="left:0;width:59.5px;text-align:right;top:497px;color:#444;letter-spacing:-0.3px;-webkit-text-stroke-width:0.1px">28 MAR 14</div>
<svg class="a" style="left:60px;top:500px" width="8" height="6" viewBox="0 0 8 6"><circle cx="2.3" cy="3" r="1.5" fill="none" stroke="#b03a78" stroke-width="0.95"/><circle cx="5.3" cy="3" r="1.5" fill="none" stroke="#b03a78" stroke-width="0.95"/></svg>
<div class="rt" style="left:68.5px;top:497px;color:#2556b4">C</div>
<div class="rt" style="left:87.5px;top:497px;color:#2556b4;letter-spacing:-0.2px;"><span style="color:#7c98cc">—</span>>Renouv.</div>
<div class="row" style="top:507px;background:#ececec"></div>
<div class="rt" style="left:5px;top:507px;color:#2a922a">A</div>
<div class="a" style="left:12.5px;top:510.5px;width:3px;height:3px;border-radius:50%;background:#f21"></div>
<div class="rt" style="left:0;width:59.5px;text-align:right;top:507px;color:#444;letter-spacing:-0.3px;-webkit-text-stroke-width:0.1px">20 MAR 14</div>
<svg class="a" style="left:60px;top:510px" width="8" height="6" viewBox="0 0 8 6"><circle cx="2.3" cy="3" r="1.5" fill="none" stroke="#b03a78" stroke-width="0.95"/><circle cx="5.3" cy="3" r="1.5" fill="none" stroke="#b03a78" stroke-width="0.95"/></svg>
<div class="rt" style="left:68.5px;top:507px;color:#2556b4">C</div>
<div class="rt" style="left:87.5px;top:507px;color:#2556b4;letter-spacing:-0.2px;"><span style="color:#7c98cc">—</span>>Renouv.</div>
<div class="row" style="top:517px;background:#ececec"></div>
<div class="rt" style="left:5px;top:517px;color:#2a922a">A</div>
<div class="a" style="left:12.5px;top:520.5px;width:3px;height:3px;border-radius:50%;background:#f21"></div>
<div class="rt" style="left:0;width:59.5px;text-align:right;top:517px;color:#444;letter-spacing:-0.3px;-webkit-text-stroke-width:0.1px">20 MAR 14</div>
<svg class="a" style="left:60px;top:520px" width="8" height="6" viewBox="0 0 8 6"><circle cx="2.3" cy="3" r="1.5" fill="none" stroke="#b03a78" stroke-width="0.95"/><circle cx="5.3" cy="3" r="1.5" fill="none" stroke="#b03a78" stroke-width="0.95"/></svg>
<div class="rt" style="left:68.5px;top:517px;color:#2556b4">C</div>
<div class="rt" style="left:87.5px;top:517px;color:#2556b4;letter-spacing:-0.2px;"><span style="color:#7c98cc">—</span>>Renouv.</div>
<div class="a" style="left:67.5px;top:177px;width:1px;height:349px;border-left:1px dotted #5aa0e0"></div>
<div class="a" style="left:566px;top:176px;width:11px;height:350px;background:linear-gradient(90deg,#f0f0f0,#fbfbfb)"></div>
<div class="a" style="left:4px;top:526px;width:562px;height:12px;background:linear-gradient(#f2f2f2,#fdfdfd)"></div>
<div class="a" style="left:567px;top:527px;width:10px;height:11px;background:#ececec"></div>
<div class="a" style="left:569px;top:177px;width:6px;height:13px;border-radius:3px;background:#c2c2c2"></div>
<div class="a" style="left:5px;top:530.5px;width:12px;height:5px;border-radius:3px;background:#c4c4c4"></div>

<!-- lower groupbox -->
<div class="a" style="left:1px;top:554px;width:579px;height:163px;border:1px solid #b8b8b8;border-radius:3px;background:#e8e8e8"></div>
<div class="a" style="left:117px;top:547px;width:347px;height:15px;border:1px solid #8c8c8c;border-radius:3px;background:linear-gradient(#ffffff,#f0f0f0)"></div>
<div class="a" style="left:117px;top:547px;width:120px;height:15px;border:1px solid #6c6c6c;border-radius:3px 0 0 3px;background:linear-gradient(#a8a8a8,#909090)"></div>
<svg class="a" style="left:117px;top:547px" width="14" height="14" viewBox="0 0 14 14"><path d="M5.8 7.4 L2.6 11.4" stroke="#333" stroke-width="1.3" stroke-linecap="round"/><circle cx="7.8" cy="4.9" r="3" fill="#dbe8f2" stroke="#777" stroke-width="0.8"/></svg>
<div class="t" style="left:140.5px;top:551px;font-size:9px;font-weight:bold;color:#2a8a70;letter-spacing:-0.25px">Détail de l'ordonnance</div>
<div class="t" style="left:245px;top:550px;font-size:9px;font-weight:bold;color:#1f78b4">F</div>
<div class="t" style="left:261px;top:551px;font-size:9px;font-weight:bold;color:#2a8a70;letter-spacing:-0.25px">Traitement de Fond</div>
<div class="a" style="left:347px;top:549px;width:1px;height:11px;background:#c0c0c0"></div>
<div class="a" style="left:354px;top:553px;width:5px;height:2px;background:#2a6ab0"></div>
<div class="t" style="left:370px;top:551px;font-size:9px;font-weight:bold;color:#2a8a70;letter-spacing:-0.22px">Traitements en cours</div>

<div class="a" style="left:2px;top:567px;width:577px;height:14px;background:#ca6332"></div>
<div class="t" style="left:5px;top:569px;font-size:9.5px;font-weight:bold;color:#fff">Ordonnance du 17 MAR 2014 –  (80 ans)</div>
<div class="a" style="left:2px;top:581px;width:576px;height:135px;background:#ececec;border-left:1px solid #c4c4c4;border-right:1px solid #999;border-bottom:1px solid #999"></div>
<div class="a" style="left:3px;top:581px;width:574px;height:13px;background:linear-gradient(#dcdfe0 0,#dcdfe0 1px,#efefef 1px)"></div>
<div class="t" style="left:85.5px;top:584px;font-size:8.75px;font-style:italic;color:#777;letter-spacing:-0.2px">Date Spécialité</div>
<div class="t" style="left:262px;top:584px;font-size:8.75px;font-style:italic;color:#777">Posologie</div>
<div class="t" style="left:429px;top:584px;font-size:8.75px;font-style:italic;color:#777">Motif</div>
<div class="a" style="left:4px;top:595px;width:564px;height:9px;background:#dcdcdc"></div>
<div class="a" style="left:4px;top:605px;width:564px;height:9px;background:#dcdcdc"></div>
<div class="t" style="left:7px;top:595px;font-size:8.75px;font-weight:bold;color:#1f78b4">F</div>
<div class="t" style="left:7px;top:605px;font-size:8.75px;font-weight:bold;color:#1f78b4">F</div>
<div class="t" style="left:7px;top:615px;font-size:8.75px;font-weight:bold;color:#1f78b4">F</div>
<div class="t" style="left:18px;top:595px;font-size:8.75px;color:#222">1</div>
<div class="t" style="left:18px;top:605px;font-size:8.75px;color:#222">2</div>
<div class="t" style="left:18px;top:615px;font-size:8.75px;color:#666">3</div>
<div class="t s" style="left:52px;top:595px;font-size:8.75px;color:#222;letter-spacing:-0.25px">17 MAR 2014</div>
<div class="t s" style="left:52px;top:605px;font-size:8.75px;color:#222;letter-spacing:-0.25px">17 MAR 2014</div>
<div class="t s" style="left:52px;top:615px;font-size:8.75px;color:#666;letter-spacing:-0.25px">17 MAR 2014</div>
<div class="a" style="left:106px;top:594px;width:147px;height:32px;overflow:hidden">
<div class="t" style="left:0;top:1px;font-size:8.75px;font-weight:bold;color:#111;letter-spacing:-0.35px">FORLAX 10G SACHET 20</div>
<div class="t" style="left:0;top:11px;font-size:8.75px;font-weight:bold;color:#111;letter-spacing:-0.35px">LEVOTHYROX 100MCG CPR SECABLE</div>
<div class="t s" style="left:0;top:21px;font-size:8.75px;color:#d0582a;letter-spacing:-0.24px">DOLIPRANE 1 000MG CPR 8</div>
</div>
<div class="a" style="left:262px;top:594px;width:164px;height:32px;overflow:hidden">
<div class="t s" style="left:0;top:1px;font-size:8.75px;color:#111;letter-spacing:-0.1px">Jusqu'à 2 Sachets le matin selon  la constipation</div>
<div class="t s" style="left:0;top:11px;font-size:8.75px;color:#111;letter-spacing:-0.1px">1 comprimé et demi le matin à avaler avec</div>
<div class="t s" style="left:0;top:21px;font-size:8.75px;color:#666;letter-spacing:-0.1px">1 comprimé le matin, le midi et le soir</div>
</div>
<div class="a" style="left:253px;top:582px;width:1px;height:122px;border-left:1px dotted #444"></div>
<div class="a" style="left:425px;top:582px;width:1px;height:122px;border-left:1px dotted #444"></div>
<div class="a" style="left:567px;top:594px;width:10px;height:111px;background:linear-gradient(90deg,#f0f0f0,#fbfbfb)"></div>
<div class="a" style="left:567px;top:704px;width:10px;height:11px;background:#ececec"></div>
<div class="a" style="left:3px;top:704.5px;width:564px;height:11px;background:linear-gradient(#f2f2f2,#fdfdfd)"></div>
<div class="a" style="left:4px;top:707px;width:12px;height:6px;border-radius:3px;background:#c4c4c4"></div>

<!-- splitter -->
<div class="a" style="left:578px;top:63px;width:2px;height:21px;background:#999"></div>
<div class="a" style="left:580px;top:63px;width:1px;height:655px;background:#999"></div>
<div class="a" style="left:581px;top:63px;width:2px;height:655px;background:#dcdcdc"></div>

<!-- RIGHT PANEL -->
<div class="a" style="left:583px;top:66px;width:332px;height:652px;background:#fff"></div>
<div class="hdr" style="left:585px;top:66px;width:328px;height:17px"></div>
<div class="a" style="left:591px;top:70px;width:320px;height:604px;background:linear-gradient(#eeeeee,#ffffff 8px)"></div>
<div class="a" style="left:904px;top:83px;width:11px;height:591px;background:linear-gradient(90deg,#ececec,#fafafa)"></div>
<div class="a" style="left:583px;top:674px;width:321px;height:11px;background:linear-gradient(#f0f0f0,#fdfdfd)"></div>
<div class="a" style="left:585px;top:677px;width:12px;height:6px;border-radius:3px;background:#c2c2c2"></div>
<!-- alertes -->
<div class="a" style="left:583px;top:689px;width:331px;height:27px;border:1px solid #9a9a9a;border-top-color:#8a8a8a"></div>
<div class="a" style="left:586px;top:684px;width:70px;height:10px;background:#fff"></div>
<div class="t" style="left:589px;top:685px;font-size:9px;font-style:italic;color:#555">Alertes en cours</div>

<!-- status bar -->
<div class="a" style="left:0;top:716px;width:915px;height:1px;background:#c4c4c4"></div>
<div class="a" style="left:0;top:717px;width:915px;height:1px;background:#7a7a7a"></div>
<div class="a" style="left:0;top:718px;width:915px;height:1px;background:#f6f6f6"></div>
<div class="a" style="left:0;top:719px;width:915px;height:13px;background:#e9ebea"></div>
<div class="a" style="left:901px;top:720px;width:1px;height:12px;background:#aaa"></div>
<svg class="a" style="left:905px;top:723px" width="10" height="9" viewBox="0 0 10 9"><path d="M9.5 2 L2.5 9 M9.5 5 L5.5 9 M9.5 8 L8.5 9" stroke="#999" stroke-width="0.8"/></svg>
</div>
<!-- N'oubliez pas (orange box) -->
<div class="a" style="left:590px;top:77px;width:328px;height:160px;border:6px solid #f4a000;border-right-width:6px;background:#dcdcdc"></div>
<div class="a" style="left:596px;top:83px;width:312px;height:25px;background:#e8546c"></div>
<div class="t" style="left:699px;top:87.5px;font-size:14px;font-weight:bold;color:#fff;-webkit-text-stroke-width:0.2px;letter-spacing:-0.15px">N'oubliez pas ...</div>
<div class="a" style="left:907px;top:83px;width:5px;height:146px;background:linear-gradient(90deg,#8a8a8a 0,#8a8a8a 1px,#e2e2e2 1px,#e2e2e2 3px,#c4c4c4 3px)"></div>
<div class="a" style="left:596px;top:108px;width:311px;height:119px;background:#ececec;border:1px solid #7ea6d8;border-top:2px solid #7ea6d8"></div>
<div class="a" style="left:597px;top:215px;width:309px;height:10px;background:linear-gradient(#f0f0f0,#fcfcfc)"></div>
<div class="a" style="left:599px;top:217px;width:12px;height:5px;border-radius:3px;background:#c2c2c2"></div>
<div class="a" style="left:895px;top:110px;width:11px;height:105px;background:linear-gradient(90deg,#f0f0f0,#fcfcfc)"></div>
<div class="a" style="left:596px;top:227px;width:312px;height:2px;background:#8a8a8a"></div>
<div class="a" style="left:596px;top:229px;width:316px;height:2px;background:#dcdcdc"></div>
<div class="a" style="left:612px;top:110px;width:283px;height:50px;overflow:hidden">
<div class="t" style="left:0;top:2px;font-size:9px;font-weight:bold;color:#f42a1e;letter-spacing:0.18px">Thyroïdite d'Hashimoto</div>
<div class="t" style="left:0;top:13.3px;font-size:9px;font-weight:bold;color:#f42a1e;letter-spacing:0.18px">Allergie au kiwi</div>
<div class="t" style="left:0;top:24.6px;font-size:9px;font-weight:bold;color:#f42a1e;letter-spacing:0.18px">Evanouissements</div>
<div class="t" style="left:0;top:35.9px;font-size:9px;font-weight:bold;color:#f42a1e;letter-spacing:0.18px">Allergie au kiwi</div>
<div class="t" style="left:200px;top:2px;font-size:9px;font-weight:bold;color:#f42a1e;letter-spacing:0.18px">depuis 16 SEP 2013</div>
<div class="t" style="left:200px;top:13.3px;font-size:9px;font-weight:bold;color:#f42a1e;letter-spacing:0.18px">depuis 7 NOV 2013</div>
<div class="t" style="left:200px;top:24.6px;font-size:9px;font-weight:bold;color:#f42a1e;letter-spacing:0.18px">depuis 2014</div>
<div class="t" style="left:200px;top:35.9px;font-size:9px;font-weight:bold;color:#f42a1e;letter-spacing:0.18px">depuis 2 SEP 2014</div>
</div>
</body></html>
